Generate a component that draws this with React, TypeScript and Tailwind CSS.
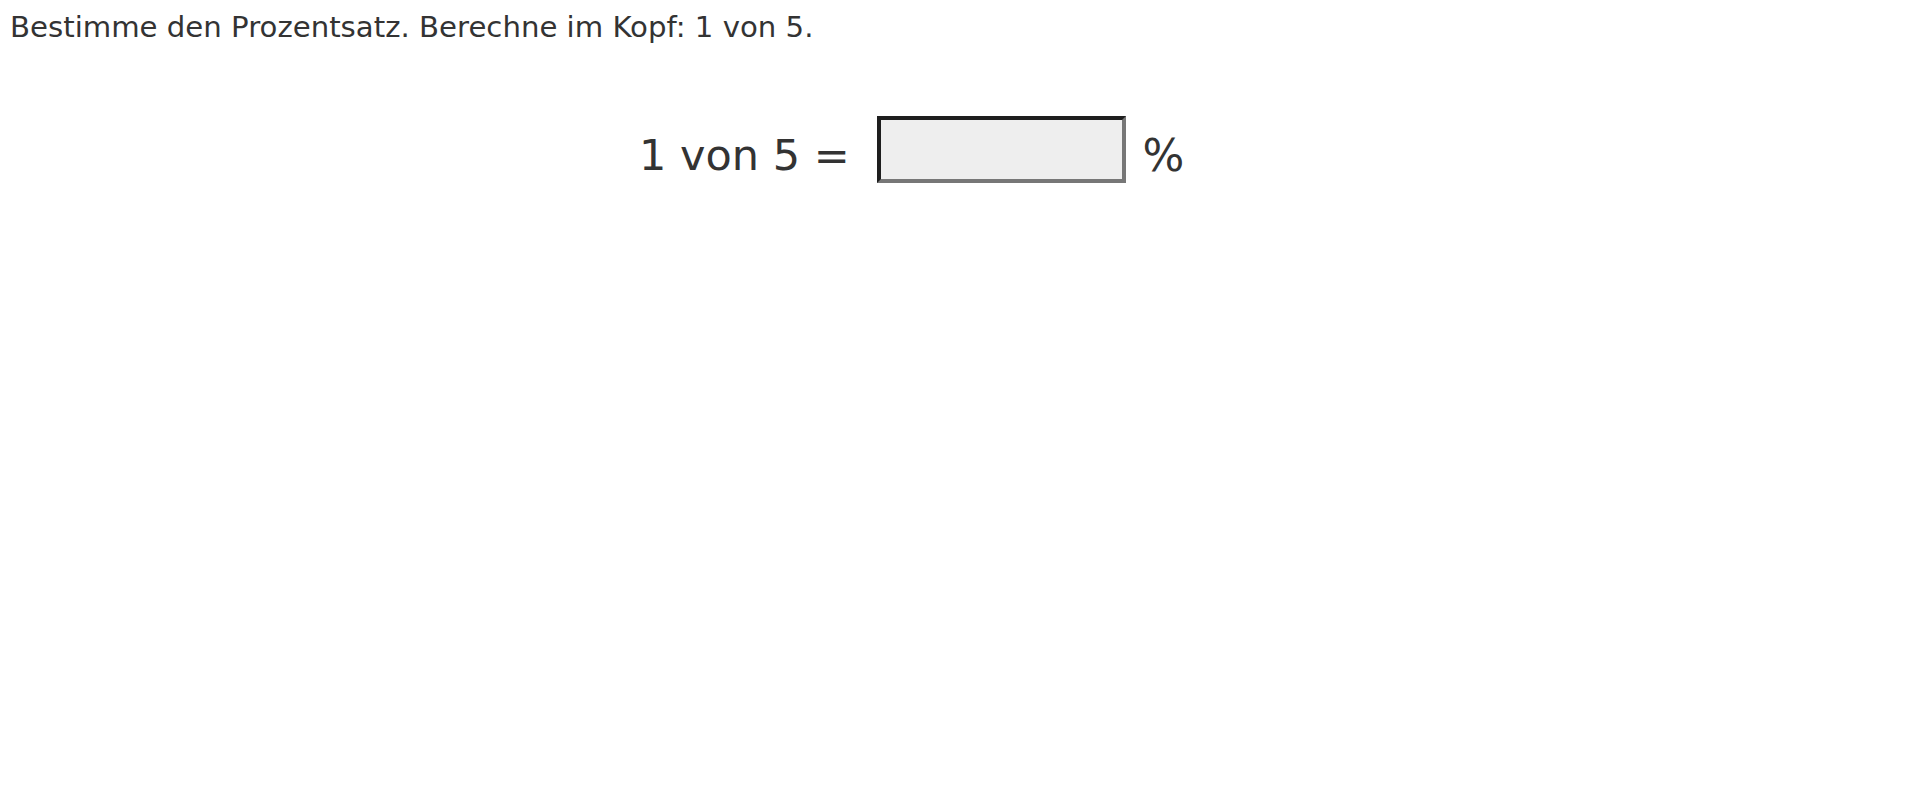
import React from "react";

const App: React.FC = () => {
  return (
    <div className="min-h-screen bg-white font-['DejaVu_Sans',sans-serif] text-[#333]">
      <p className="pl-[10px] pt-[6px] text-[29.2px] leading-normal">
        Bestimme den Prozentsatz. Berechne im Kopf: 1 von 5.
      </p>

      <div className="mt-[66px] flex items-start pl-[639px]">
        <span className="mt-[7px] text-[43px] leading-normal whitespace-pre">1 von 5 = </span>
        <input
          type="text"
          className="ml-[14px] h-[67px] w-[249px] border-[4px] border-t-[#1e1e1e] border-l-[#1e1e1e] border-r-[#777] border-b-[#777] bg-[#eee] outline-none"
        />
        <span className="ml-[16px] mt-[7px] text-[44px] leading-normal">%</span>
      </div>
    </div>
  );
};

export default App;
